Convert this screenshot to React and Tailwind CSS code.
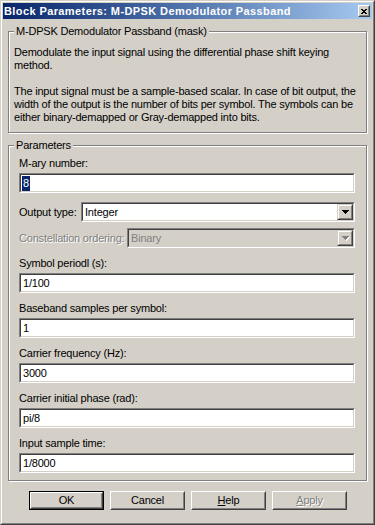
import React from "react";

const FONT = { fontFamily: '"Liberation Sans", Arial, sans-serif' };

function Sunken({ children, className = "", inner = "bg-white" }) {
  return (
    <div className={"border border-t-[#808080] border-l-[#808080] border-r-white border-b-white " + className}>
      <div className={"h-full border border-t-[#404040] border-l-[#404040] border-r-[#d4d0c8] border-b-[#d4d0c8] flex items-center " + inner}>
        {children}
      </div>
    </div>
  );
}

function Edit({ value, selected }) {
  return (
    <Sunken className="h-[20px]">
      {selected ? (
        <span className="ml-[1px] h-[15px] flex items-center bg-[#0a246a] text-white px-[1px]">{value}</span>
      ) : (
        <span className="pl-[2px] whitespace-nowrap">{value}</span>
      )}
    </Sunken>
  );
}

function Tri({ fill, dx = 0, dy = 0 }) {
  return (
    <g fill={fill} transform={`translate(${dx},${dy})`}>
      <rect x="0" y="0" width="7" height="1" />
      <rect x="1" y="1" width="5" height="1" />
      <rect x="2" y="2" width="3" height="1" />
      <rect x="3" y="3" width="1" height="1" />
    </g>
  );
}

function Arrow({ disabled }) {
  if (disabled) {
    return (
      <svg width="8" height="5" viewBox="0 0 8 5" shapeRendering="crispEdges" className="ml-[1px] mt-[1px]">
        <Tri fill="#ffffff" dx={1} dy={1} />
        <Tri fill="#808080" />
      </svg>
    );
  }
  return (
    <svg width="7" height="4" viewBox="0 0 7 4" shapeRendering="crispEdges">
      <Tri fill="#000000" />
    </svg>
  );
}

function Raised({ children, className = "" }) {
  return (
    <div className={"border border-t-[#d4d0c8] border-l-[#d4d0c8] border-r-[#404040] border-b-[#404040] " + className}>
      <div className="h-full w-full border border-t-white border-l-white border-r-[#808080] border-b-[#808080] bg-[#d4d0c8] flex items-center justify-center">
        {children}
      </div>
    </div>
  );
}

function Combo({ value, disabled, className = "" }) {
  return (
    <Sunken className={"h-[20px] " + className} inner={disabled ? "bg-[#d4d0c8]" : "bg-white"}>
      <span className={"flex-1 pl-[2px] whitespace-nowrap " + (disabled ? "text-[#808080]" : "text-black")}>
        {value}
      </span>
      <Raised className="w-[16px] h-full">
        <Arrow disabled={disabled} />
      </Raised>
    </Sunken>
  );
}

function Button({ children, isDefault, disabled }) {
  return (
    <div className={"w-[75px] h-[19px] bg-[#d4d0c8] " + (isDefault ? "border border-black" : "")}>
      <div className="h-full w-full border border-t-white border-l-white border-r-[#404040] border-b-[#404040]">
        <div className="h-full w-full border border-t-[#d4d0c8] border-l-[#d4d0c8] border-r-[#808080] border-b-[#808080] flex items-center justify-center">
          <span className={disabled ? "text-[#808080] [text-shadow:1px_1px_0_#ffffff]" : "text-black"}>
            {children}
          </span>
        </div>
      </div>
    </div>
  );
}

function Group({ label, children, className = "" }) {
  return (
    <div
      className={
        "relative mx-[5px] border border-[#808080] shadow-[inset_1px_1px_0_#ffffff,1px_1px_0_#ffffff] " + className
      }
    >
      <span className="absolute left-[5px] top-[-7px] px-[2px] bg-[#d4d0c8] leading-[13px] whitespace-nowrap">
        {label}
      </span>
      {children}
    </div>
  );
}

function Label({ children }) {
  return <div className="h-[13px] leading-[13px] whitespace-nowrap">{children}</div>;
}

function Field({ label, value, selected, first }) {
  return (
    <>
      <div className={first ? "" : "mt-[9px]"}>
        <Label>{label}</Label>
      </div>
      <div className="mt-[3px]">
        <Edit value={value} selected={selected} />
      </div>
    </>
  );
}

export default function App() {
  return (
    <div
      className="w-[375px] h-[525px] bg-[#d4d0c8] text-[11px] leading-[13px] tracking-[-0.2px] text-black border border-t-[#d4d0c8] border-l-[#d4d0c8] border-r-[#404040] border-b-[#404040] overflow-hidden"
      style={FONT}
    >
      <div className="h-full border border-t-white border-l-white border-r-[#808080] border-b-[#808080] p-[1px] flex flex-col">
        {/* Title bar */}
        <div className="h-[16px] shrink-0 bg-linear-to-r from-[#0a246a] to-[#a6caf0] flex items-center pl-[1px] pr-[2px]">
          <span className="flex-1 text-white font-bold text-[11px] tracking-[0.4px] whitespace-nowrap leading-[16px]">
            Block Parameters: M-DPSK Demodulator Passband
          </span>
          <div className="w-[12px] h-[12px] border border-t-white border-l-white border-r-[#404040] border-b-[#404040]">
            <div className="w-full h-full border border-t-[#d4d0c8] border-l-[#d4d0c8] border-r-[#808080] border-b-[#808080] bg-[#d4d0c8] flex items-center justify-center">
              <svg width="6" height="5" viewBox="0 0 6 5" shapeRendering="crispEdges">
                <g fill="#000">
                  <rect x="0" y="0" width="2" height="1" />
                  <rect x="4" y="0" width="2" height="1" />
                  <rect x="1" y="1" width="4" height="1" />
                  <rect x="2" y="2" width="2" height="1" />
                  <rect x="1" y="3" width="4" height="1" />
                  <rect x="0" y="4" width="2" height="1" />
                  <rect x="4" y="4" width="2" height="1" />
                </g>
              </svg>
            </div>
          </div>
        </div>

        {/* Description group */}
        <Group label="M-DPSK Demodulator Passband (mask)" className="mt-[12px] pt-[14px] pb-[8px] pl-[5px]">
          <div className="whitespace-nowrap">Demodulate the input signal using the differential phase shift keying</div>
          <div className="whitespace-nowrap">method.</div>
          <div className="h-[13px]" />
          <div className="whitespace-nowrap">The input signal must be a sample-based scalar. In case of bit output, the</div>
          <div className="whitespace-nowrap">width of the output is the number of bits per symbol. The symbols can be</div>
          <div className="whitespace-nowrap">either binary-demapped or Gray-demapped into bits.</div>
        </Group>

        {/* Parameters group */}
        <Group label="Parameters" className="mt-[12px] pt-[11px] pb-[7px] pl-[10px] pr-[11px]">
          <Field first label="M-ary number:" value="8" selected />

          <div className="mt-[9px] flex items-center justify-between">
            <span className="whitespace-nowrap">Output type:</span>
            <Combo value="Integer" className="w-[274px]" />
          </div>

          <div className="mt-[6px] flex items-center justify-between">
            <span className="whitespace-nowrap text-[#808080] [text-shadow:1px_1px_0_#ffffff]">
              Constellation ordering:
            </span>
            <Combo value="Binary" disabled className="w-[228px]" />
          </div>

          <Field label="Symbol periodl (s):" value="1/100" />
          <Field label="Baseband samples per symbol:" value="1" />
          <Field label="Carrier frequency (Hz):" value="3000" />
          <Field label="Carrier initial phase (rad):" value="pi/8" />
          <Field label="Input sample time:" value="1/8000" />
        </Group>

        {/* Buttons */}
        <div className="mt-[10px] flex justify-center gap-[6px] pl-[1px]">
          <Button isDefault>OK</Button>
          <Button>Cancel</Button>
          <Button>
            <span className="underline underline-offset-[1px]">H</span>elp
          </Button>
          <Button disabled>
            <span className="underline underline-offset-[1px]">A</span>pply
          </Button>
        </div>
      </div>
    </div>
  );
}
